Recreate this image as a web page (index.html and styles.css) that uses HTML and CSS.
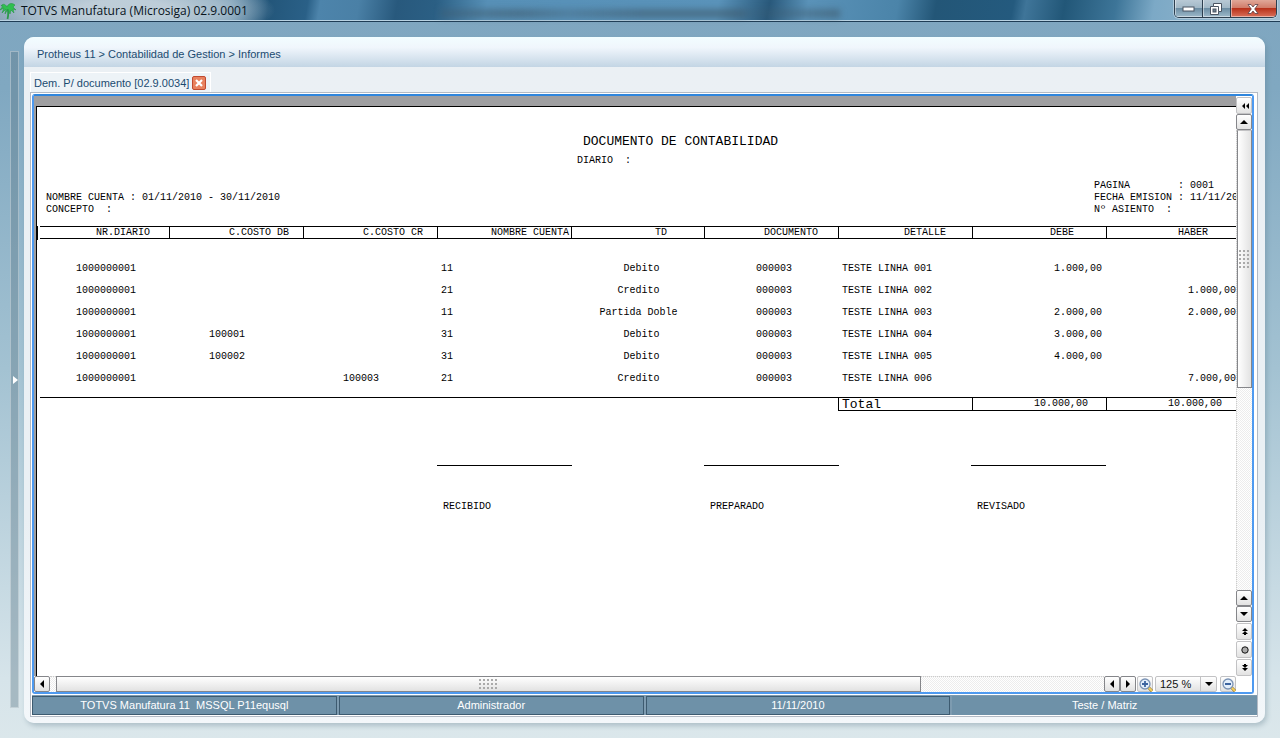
FILE: index.html
```html
<!DOCTYPE html>
<html lang="es">
<head>
<meta charset="utf-8">
<title>TOTVS Manufatura (Microsiga) 02.9.0001</title>
<link rel="stylesheet" href="styles.css">
</head>
<body>
<svg class="defs" aria-hidden="true">
  <symbol id="tri-up" viewBox="0 0 8 4"><path d="M4 0L8 4H0z"/></symbol>
  <symbol id="tri-down" viewBox="0 0 8 4"><path d="M0 0H8L4 4z"/></symbol>
  <symbol id="tri-left" viewBox="0 0 4 8"><path d="M4 0V8L0 4z"/></symbol>
  <symbol id="tri-right" viewBox="0 0 4 8"><path d="M0 0V8L4 4z"/></symbol>
  <symbol id="lens" viewBox="0 0 14 14">
    <path d="M9 9L13 13" stroke="#8b6a20" stroke-width="3"/><path d="M9 9L13 13" stroke="#f3cf5b" stroke-width="2"/>
    <circle cx="6" cy="6" r="5" fill="#e3eefb" stroke="#7b93b5" stroke-width="1.3"/>
  </symbol>
</svg>

<header class="titlebar">
  <svg class="logo" viewBox="0 0 16 18" aria-hidden="true">
    <path d="M7 6C8.500 9 8.500 13 7.500 17" fill="none" stroke="#2c9a4b" stroke-width="1.800"/>
    <path d="M7 5C5 1 2 2 1 4L3 4L0 8L4 6L2 11L6 7L5 12L8 7L10 12L11 8L14 11L13 7L16 8L13 5L15 3C11 0 8 2 7 5z" fill="#2fc04f" stroke="#1f8f3c" stroke-width=".5"/>
  </svg>
  <h1>TOTVS Manufatura (Microsiga) 02.9.0001</h1>
  <div class="glass-shade"></div>
  <div class="window-buttons">
    <button type="button" aria-label="Minimizar"><svg width="13" height="6" viewBox="0 0 13 6"><rect x="1" y="1" width="11" height="4" fill="#fff" stroke="#4b5563"/></svg></button>
    <button type="button" aria-label="Restaurar"><svg width="12" height="12" viewBox="0 0 12 12"><path d="M3.500.500h8v8h-3v3h-8v-8h3z" fill="#fff" stroke="#4b5563"/><path d="M3.500 3.500h5v5" fill="none" stroke="#4b5563"/><rect x="3" y="6" width="3" height="3" fill="#6d8191" stroke="#4b5563"/></svg></button>
    <button type="button" class="close" aria-label="Cerrar"><svg width="12" height="10" viewBox="0 0 12 10"><path d="M1 .500h3L6 3l2-2.500h3L7.700 5 11 9.500H8L6 7 4 9.500H1L4.300 5z" fill="#fff" stroke="#5b4048" stroke-width=".8"/></svg></button>
  </div>
</header>

<div class="desktop">
  <button type="button" class="rail" aria-label="Expandir menú"><svg width="5" height="8" viewBox="0 0 5 8"><path d="M0 0L5 4L0 8z" fill="#fff"/></svg></button>

  <main class="window">
    <nav class="crumbs">Protheus 11 &gt; Contabilidad de Gestion &gt; Informes</nav>
    <div class="tabs">
      <div class="tab">
        <span>Dem. P/ documento [02.9.0034]</span>
        <button type="button" aria-label="Cerrar pestaña"><svg width="8" height="8" viewBox="0 0 8 8"><path d="M1 1L7 7M7 1L1 7" stroke="#fff" stroke-width="2.200"/></svg></button>
      </div>
    </div>

    <div class="frame">
      <div class="viewer">
        <div class="canvas">
          <article class="paper">
            <h2>DOCUMENTO DE CONTABILIDAD</h2>
            <p class="diario">DIARIO  :</p>
            <div class="meta">
              <p>NOMBRE CUENTA : 01/11/2010 - 30/11/2010
CONCEPTO  :</p>
              <p>PAGINA        : 0001
FECHA EMISION : 11/11/2010
Nº ASIENTO  :</p>
            </div>
            <div class="ledger">
              <table>
                <colgroup><col class="first"><col><col><col><col class="narrow"><col><col><col><col></colgroup>
                <thead>
                  <tr><th class="h-diario">NR.DIARIO</th><th class="h-costo">C.COSTO DB</th><th class="h-costo">C.COSTO CR</th><th class="h-cuenta">NOMBRE CUENTA</th><th class="h-td">TD</th><th class="h-doc">DOCUMENTO</th><th class="h-det">DETALLE</th><th class="h-val">DEBE</th><th class="h-val">HABER</th></tr>
                </thead>
                <tbody>
                  <tr><td class="diario-nr">1000000001</td><td class="costo"></td><td class="costo"></td><td>11</td><td class="td">&nbsp;Debito</td><td class="doc">000003</td><td>TESTE LINHA 001</td><td class="val">1.000,00</td><td class="val"></td></tr>
                  <tr><td class="diario-nr">1000000001</td><td class="costo"></td><td class="costo"></td><td>21</td><td class="td">Credito</td><td class="doc">000003</td><td>TESTE LINHA 002</td><td class="val"></td><td class="val">1.000,00</td></tr>
                  <tr><td class="diario-nr">1000000001</td><td class="costo"></td><td class="costo"></td><td>11</td><td class="td">Partida Doble</td><td class="doc">000003</td><td>TESTE LINHA 003</td><td class="val">2.000,00</td><td class="val">2.000,00</td></tr>
                  <tr><td class="diario-nr">1000000001</td><td class="costo">100001</td><td class="costo"></td><td>31</td><td class="td">&nbsp;Debito</td><td class="doc">000003</td><td>TESTE LINHA 004</td><td class="val">3.000,00</td><td class="val"></td></tr>
                  <tr><td class="diario-nr">1000000001</td><td class="costo">100002</td><td class="costo"></td><td>31</td><td class="td">&nbsp;Debito</td><td class="doc">000003</td><td>TESTE LINHA 005</td><td class="val">4.000,00</td><td class="val"></td></tr>
                  <tr><td class="diario-nr">1000000001</td><td class="costo"></td><td class="costo">100003</td><td>21</td><td class="td">Credito</td><td class="doc">000003</td><td>TESTE LINHA 006</td><td class="val"></td><td class="val">7.000,00</td></tr>
                </tbody>
                <tfoot>
                  <tr><td colspan="6" class="blank"></td><th scope="row">Total</th><td class="sum">10.000,00</td><td class="sum">10.000,00</td></tr>
                </tfoot>
              </table>
            </div>
            <div class="signatures"><p>RECIBIDO</p><p>PREPARADO</p><p>REVISADO</p></div>
          </article>
        </div>

        <div class="vbar">
          <button type="button" class="flat" aria-label="Contraer"><svg width="7" height="6" viewBox="0 0 7 6"><path d="M3 0V6L0 3zM7 0V6L4 3z"/></svg></button>
          <button type="button" aria-label="Arriba"><svg width="8" height="4"><use href="#tri-up"/></svg></button>
          <div class="track"><div class="thumb"><i class="grip"></i></div></div>
          <button type="button" aria-label="Subir"><svg width="8" height="4"><use href="#tri-up"/></svg></button>
          <button type="button" aria-label="Bajar"><svg width="8" height="4"><use href="#tri-down"/></svg></button>
          <button type="button" class="flat page" aria-label="Página anterior"><svg width="6" height="7" viewBox="0 0 6 7"><path d="M3 0L6 3H0zM3 3L6 6H4V7H2V6H0z"/></svg></button>
          <button type="button" class="flat page" aria-label="Ir a página"><svg width="8" height="8" viewBox="0 0 8 8"><circle cx="4" cy="4" r="3.200" fill="#aaa" stroke="#111"/></svg></button>
          <button type="button" class="flat page" aria-label="Página siguiente"><svg width="6" height="7" viewBox="0 0 6 7"><path d="M3 7L0 4H6zM3 4L0 1H2V0H4V1H6z"/></svg></button>
        </div>

        <div class="hbar">
          <button type="button" aria-label="Izquierda"><svg width="4" height="8"><use href="#tri-left"/></svg></button>
          <div class="track"><div class="thumb"><i class="grip"></i></div></div>
          <button type="button" aria-label="Izquierda"><svg width="4" height="8"><use href="#tri-left"/></svg></button>
          <button type="button" aria-label="Derecha"><svg width="4" height="8"><use href="#tri-right"/></svg></button>
          <button type="button" class="flat zoom" aria-label="Ampliar"><svg width="14" height="14" viewBox="0 0 14 14"><use href="#lens"/><path d="M3 6H9M6 3V9" stroke="#3c64a0" stroke-width="1.800"/></svg></button>
          <div class="scale">
            <select aria-label="Escala"><option>125 %</option></select>
            <span><svg width="8" height="4"><use href="#tri-down"/></svg></span>
          </div>
          <button type="button" class="flat zoom" aria-label="Reducir"><svg width="14" height="14" viewBox="0 0 14 14"><use href="#lens"/><path d="M3 6H9" stroke="#3c64a0" stroke-width="1.800"/></svg></button>
        </div>
      </div>

      <footer class="status">
        <div>TOTVS Manufatura 11&nbsp; MSSQL P11equsql</div><div>Administrador</div><div>11/11/2010</div><div class="last">Teste / Matriz</div>
      </footer>
    </div>
  </main>
</div>
</body>
</html>
```
FILE: styles.css
```css
* { box-sizing: border-box; }
body {
  margin: 0;
  height: 100vh;
  display: flex;
  flex-direction: column;
  overflow: hidden;
  font: 11px/14px "Liberation Sans", Arial, sans-serif;
  background: linear-gradient(#7fa6c0 0, #80a8c1 12%, #a3c2d2 50%, #d6e4ea 92%, #dbe7eb 100%);
}
h1, h2, p { margin: 0; font-weight: normal; }
button { padding: 0; font: inherit; }
svg { display: block; flex: none; }
.defs { position: absolute; width: 0; height: 0; }

/* title bar */
.titlebar {
  flex: none;
  display: flex;
  height: 22px;
  border-bottom: 1px solid #1f3d55;
  box-shadow: inset 0 -1px #b9d2e2;
  background:
    radial-gradient(ellipse 150px 34px at 125px 10px, #c3d1dbee 30%, #b4c7d4bb 65%, #b4c7d400 100%),
    linear-gradient(100deg, #7e9bb0 0, #6b93ae 18%, #23567a 21%, #2a6087 24%, #4d84ab 25%, #4a80a6 28%, #28597d 31%, #2b5f84 34%, #5790b7 38%, #5a93ba 56%, #29597b 60%, #5a92b8 63%, #4b84a9 70%, #235677 73%, #245a7e 79%, #3f7599 80%, #225778 83%, #3d7598 87%, #7ca9c6 90%, #9fbdd0 100%);
}
.logo { width: 16px; height: 18px; margin: 2px 0 0; }
.titlebar h1 {
  margin-left: 5px;
  font: 12px/21px "Open Sans", "Noto Sans", sans-serif;
  color: #08131c;
}
.glass-shade {
  width: 400px;
  height: 9px;
  margin: 9px auto 0 15%;
  background: linear-gradient(90deg, #3f5b6e66, #3f5b6e99 20%, #3f5b6e55 32%, #3f5b6e99 50%, #3f5b6e99 75%, #3f5b6e33 78%, #3f5b6e99);
  filter: blur(3px);
}
.window-buttons {
  display: flex;
  width: 103px;
  height: 18px;
  margin-right: 3px;
  border: 1px solid #2d3f4f;
  border-top: 0;
  border-radius: 0 0 5px 5px;
  overflow: hidden;
  box-shadow: 0 0 0 1px #d5e3ec88;
}
.window-buttons button {
  flex: 28;
  display: flex;
  align-items: center;
  justify-content: center;
  border: 0;
  border-right: 1px solid #2d3f4f;
  box-shadow: inset 1px -1px #ffffff77;
  background: linear-gradient(#b8c9d5, #a0b7c6 48%, #6d8ea4 50%, #9db9ca);
}
.window-buttons .close {
  flex: 47;
  border-right: 0;
  background: linear-gradient(#e0a798, #d07a67 48%, #b8321b 50%, #d9705a);
}

.desktop { flex: 1; min-height: 0; display: flex; gap: 5px; padding: 15px 15px 15px 10px; }
.rail {
  flex: none;
  display: flex;
  align-items: center;
  justify-content: flex-end;
  width: 9px;
  margin: 14px 0 15px;
  border: 1px solid #ffffff55;
  background: #5c778866;
}

.window {
  flex: 1;
  min-width: 0;
  display: flex;
  flex-direction: column;
  padding-bottom: 6px;
  border-radius: 10px;
  background: linear-gradient(#ebf0f4, #eaf0f4 70%, #f3f7fa);
  box-shadow: 2px 3px 5px #5a788855;
  overflow: hidden;
}
.crumbs {
  padding: 10px 13px 6px;
  color: #1b4b70;
  background: linear-gradient(#f2fdff, #f0f6fc 35%, #c3d5e4);
}
.tabs { display: flex; padding: 5px 6px 0; }
.tab {
  display: flex;
  align-items: center;
  gap: 3px;
  height: 20px;
  padding: 0 4px 0 3px;
  color: #1b4b70;
  border: 1px solid #fff;
  border-bottom: 0;
  background: #edf3f7;
}
.tab button {
  display: flex;
  align-items: center;
  justify-content: center;
  width: 14px;
  height: 14px;
  border: 1px solid #c04a30;
  border-radius: 2px;
  background: #e8825f;
}

.frame {
  flex: 1;
  min-height: 0;
  display: flex;
  flex-direction: column;
  gap: 1px;
  margin: 0 7px 0 6px;
  padding: 1px 0 1px 1px;
  border: 1px solid #b3bac4;
  background: #fff;
}
.viewer {
  flex: 1;
  min-height: 0;
  display: grid;
  grid-template: minmax(0, 1fr) 16px / minmax(0, 1fr) 16px;
  margin-right: 3px;
  border: 2px solid #4e9af0;
  border-top-color: #2f86dd;
  border-radius: 3px;
}
.canvas { overflow: hidden; display: flex; padding: 10px 0 0 2px; background: #9f9fa1; }

/* printed page */
.paper {
  flex: none;
  width: 1210px;
  padding: 27px 0 0 3px;
  border: solid #000;
  border-width: 1px 0 0 1px;
  background: #fff;
  color: #000;
  font: 10px/12px "Liberation Mono", "Courier New", monospace;
}
.paper p { white-space: pre; }
.paper h2 { margin-left: 543px; font-size: 13px; line-height: 16px; }
.diario { margin: 5px 0 13px 537px; }
.meta { display: flex; justify-content: space-between; align-items: flex-end; margin: 0 -4px 10px 6px; }

.ledger { position: relative; }
.ledger::before { content: ""; position: absolute; left: -3px; top: 0; width: 1px; height: 14px; background: #000; }
table { width: 1201px; table-layout: fixed; border-collapse: separate; border-spacing: 0; }
col { width: 134px; }
.first { width: 130px; }
.narrow { width: 133px; }
th, td { padding: 0 3px; font-weight: normal; text-align: left; white-space: nowrap; }
thead th { height: 13px; line-height: 11px; border: solid #000; border-width: 1px 1px 1px 0; text-align: right; }
.h-diario { padding-right: 19px; }
.h-costo { padding-right: 14px; }
.h-cuenta { padding-right: 2px; }
.h-td { padding-right: 37px; }
.h-doc { padding-right: 20px; }
.h-det { padding-right: 26px; }
.h-val { padding-right: 32px; }
tbody::before { content: ""; display: block; height: 19px; }
tbody::after { content: ""; display: block; height: 7px; }
tbody td { height: 22px; }
.diario-nr { padding-left: 36px; }
.costo { padding-left: 39px; }
.td { padding: 0; text-align: center; }
.doc { padding-left: 51px; }
.val { padding-right: 5px; text-align: right; }
tfoot td, tfoot th { height: 14px; line-height: 12px; border: solid #000; border-width: 1px 1px 1px 0; }
tfoot th { padding-top: 2px; font-size: 13px; line-height: 10px; }
tfoot .blank { border-bottom: 0; }
tfoot .sum { padding-right: 18px; text-align: right; }
.signatures { display: grid; grid-template-columns: repeat(3, 135px); gap: 132px; margin: 54px 0 0 397px; }
.signatures p { padding: 35px 6px 0; border-top: 1px solid #000; }

/* scroll bars and zoom tools */
.vbar { grid-area: 1 / 2 / 3 / 3; display: flex; flex-direction: column; padding: 1px 0 16px; background: #fff; }
.hbar { grid-area: 2 / 1; display: flex; background: #fff; }
.vbar button, .hbar button {
  flex: none;
  display: flex;
  align-items: center;
  justify-content: center;
  width: 16px;
  height: 16px;
  border: 1px solid #85868a;
  border-radius: 2px;
  background: linear-gradient(#fff, #e2e2e2);
}
.vbar .flat, .hbar .flat { border-color: #c2c2c4; }
.vbar .flat { height: 17px; padding-left: 2px; }
.vbar .page { margin-top: 1px; }
.track { flex: 1; min-height: 0; background: repeating-conic-gradient(#ededed 0 25%, #fff 0 50%) 0 0 / 2px 2px; }
.thumb { display: flex; align-items: center; justify-content: center; border: 1px solid #85868a; }
.vbar .track { border-left: 1px dotted #ccc; }
.vbar .thumb { height: 56%; border-top-color: #c2c2c4; background: linear-gradient(90deg, #fff, #e2e2e2); }
.hbar .track { border-top: 1px dotted #ccc; padding-left: 6px; }
.hbar .thumb { width: 82.5%; height: 16px; margin-top: -1px; background: linear-gradient(#fff, #e2e2e2); }
.grip { width: 11px; height: 18px; background: radial-gradient(circle at 1px 1px, #aaa 1px, transparent 1px) 0 0 / 4px 4px; }
.hbar .grip { width: 18px; height: 11px; }
.hbar .zoom { margin-left: 1px; padding: 2px 0 0 2px; }
.scale { display: flex; width: 62px; margin: 0 2px; border: 1px solid #c2c2c4; border-radius: 2px; background: linear-gradient(#fff, #e2e2e2); position: relative; }
.scale select { appearance: none; width: 100%; padding: 0 0 0 4px; border: 0; background: none; font: inherit; color: #111; }
.scale span { position: absolute; right: 0; top: 0; bottom: 0; width: 16px; display: flex; align-items: center; justify-content: center; border-left: 1px solid #c2c2c4; pointer-events: none; }

.status { flex: none; display: grid; grid-template-columns: repeat(4, 1fr); gap: 2px; padding-top: 1px; background: #7d9bb0; color: #fff; text-align: center; }
.status div { padding: 1px 0 2px; border: 1px solid #3d5b70; background: #6e91a8; }
.status .last { border-color: #6e91a8; }
```
